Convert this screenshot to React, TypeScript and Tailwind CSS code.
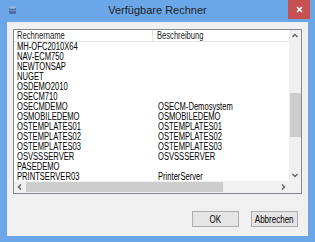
const rows: [string, string][] = [
  ["MH-OFC2010X64", ""],
  ["NAV-ECM750", ""],
  ["NEWTONSAP", ""],
  ["NUGET", ""],
  ["OSDEMO2010", ""],
  ["OSECM710", ""],
  ["OSECMDEMO", "OSECM-Demosystem"],
  ["OSMOBILEDEMO", "OSMOBILEDEMO"],
  ["OSTEMPLATES01", "OSTEMPLATES01"],
  ["OSTEMPLATES02", "OSTEMPLATES02"],
  ["OSTEMPLATES03", "OSTEMPLATES03"],
  ["OSVSSSERVER", "OSVSSSERVER"],
  ["PASEDEMO", ""],
  ["PRINTSERVER03", "PrinterServer"],
];

function Chevron(props: { dir: "up" | "down" | "left" | "right" }) {
  const d = {
    up: "M1.5 5 L4 2.5 L6.5 5",
    down: "M1.5 3 L4 5.5 L6.5 3",
    left: "M5 1.5 L2.5 4 L5 6.5",
    right: "M3 1.5 L5.5 4 L3 6.5",
  }[props.dir];
  return (
    <svg width="8" height="8" viewBox="0 0 8 8">
      <path d={d} fill="none" stroke="#606060" strokeWidth="1.4" />
    </svg>
  );
}

// narrow bitmap-like look of the original font
function Narrow(props: { children: React.ReactNode }) {
  return <span className="inline-block origin-left scale-x-[0.76] whitespace-nowrap">{props.children}</span>;
}

export default function App() {
  return (
    <div className="w-[315px] h-[242px] bg-[#6ba7e8] flex flex-col px-[7px] pb-[6px] font-['Liberation_Sans',sans-serif]">
      <div className="h-[22px] flex items-center relative shrink-0">
        <svg width="7" height="9" viewBox="0 0 7 9" className="ml-[2px] mb-[2px]">
          <rect x="0" y="1" width="7" height="7" rx="1" fill="#4a6fa5" />
          <ellipse cx="3.5" cy="1.5" rx="3.5" ry="1.3" fill="#9bb8dc" />
          <rect x="0" y="4" width="7" height="0.8" fill="#7f9cc6" />
        </svg>
        <div className="flex-1 text-center text-[11px] text-[#1e1e1e] pr-[9px] mb-[1px]">Verfügbare Rechner</div>
        <div className="absolute right-[-2px] top-0 w-[22px] h-[19px] bg-[#c75050] flex items-center justify-center">
          <svg width="7" height="7" viewBox="0 0 7 7">
            <path d="M1 1 L6 6 M6 1 L1 6" stroke="#fff" strokeWidth="1.6" />
          </svg>
        </div>
      </div>
      <div className="flex-1 bg-[#f0f0f0] flex flex-col px-[6px] pt-[7px]">
        <div className="h-[165px] border border-[#828790] bg-white flex flex-col text-[10px] text-black leading-[10px]">
          <div className="flex flex-1 min-h-0">
            <div className="flex-1 flex flex-col min-w-0 overflow-hidden">
              <div className="h-[12px] flex border-b border-[#e5e5e5] shrink-0 text-[#222]">
                <div className="w-[139px] border-r border-[#e5e5e5] pl-[3px] leading-[11px]">
                  <Narrow>Rechnername</Narrow>
                </div>
                <div className="flex-1 pl-[4px] leading-[11px]">
                  <Narrow>Beschreibung</Narrow>
                </div>
              </div>
              {rows.map(([name, desc]) => (
                <div key={name} className="h-[10px] flex whitespace-nowrap">
                  <div className="w-[140px] pl-[3px]">
                    <Narrow>{name}</Narrow>
                  </div>
                  <div className="flex-1 pl-[4px]">
                    <Narrow>{desc}</Narrow>
                  </div>
                </div>
              ))}
            </div>
            <div className="w-[12px] bg-[#f0f0f0] flex flex-col items-center">
              <div className="h-[12px] flex items-center justify-center">
                <Chevron dir="up" />
              </div>
              <div className="h-[51px]" />
              <div className="w-[11px] h-[44px] bg-[#cdcdcd]" />
              <div className="flex-1" />
              <div className="h-[12px] flex items-center justify-center">
                <Chevron dir="down" />
              </div>
            </div>
          </div>
          <div className="h-[12px] flex bg-[#f0f0f0] shrink-0">
            <div className="w-[12px] flex items-center justify-center">
              <Chevron dir="left" />
            </div>
            <div className="w-[197px] my-[1px] bg-[#cdcdcd]" />
            <div className="flex-1" />
            <div className="w-[12px] flex items-center justify-center">
              <Chevron dir="right" />
            </div>
            <div className="w-[12px] bg-[#f0f0f0]" />
          </div>
        </div>
        <div className="flex justify-end gap-[12px] mt-[17px] pr-[4px] text-[10px]">
          <button className="w-[47px] h-[16px] border border-[#adadad] bg-[#e5e5e5] text-black flex items-center justify-center">
            <span className="inline-block scale-x-[0.8]">OK</span>
          </button>
          <button className="w-[47px] h-[16px] border border-[#adadad] bg-[#e5e5e5] text-black flex items-center justify-center">
            <span className="inline-block scale-x-[0.8]">Abbrechen</span>
          </button>
        </div>
      </div>
    </div>
  );
}
